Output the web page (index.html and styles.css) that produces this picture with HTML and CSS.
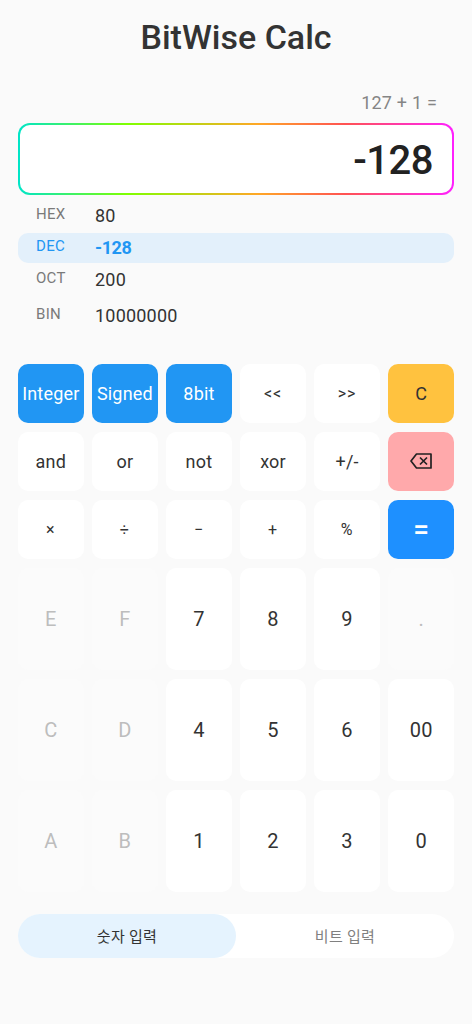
FILE: index.html
```html
<!DOCTYPE html>
<html lang="ko">
<head>
    <meta charset="UTF-8">
    <meta name="viewport" content="width=device-width, initial-scale=1.0">
    <title>BitWise Calc</title>
    <link rel="stylesheet" href="styles.css">
</head>
<body>
    <div class="container">
        <h1 class="title">BitWise Calc</h1>
        <p class="expression">127 + 1 =</p>
        <div class="display">
            <div class="display-inner">-128</div>
        </div>
        <div class="radix-list">
            <div class="radix-row"><span class="radix-label">HEX</span><span class="radix-value">80</span></div>
            <div class="radix-row active"><span class="radix-label">DEC</span><span class="radix-value">-128</span></div>
            <div class="radix-row"><span class="radix-label">OCT</span><span class="radix-value">200</span></div>
            <div class="radix-row bin"><span class="radix-label">BIN</span><span class="radix-value">10000000</span></div>
        </div>
        <div class="keypad">
            <button class="key blue">Integer</button>
            <button class="key blue">Signed</button>
            <button class="key blue">8bit</button>
            <button class="key small">&lt;&lt;</button>
            <button class="key small">&gt;&gt;</button>
            <button class="key yellow">C</button>

            <button class="key">and</button>
            <button class="key">or</button>
            <button class="key">not</button>
            <button class="key">xor</button>
            <button class="key">+/-</button>
            <button class="key pink">
                <svg class="backspace" width="22" height="16" viewBox="0 0 22 16" fill="none" stroke="#222" stroke-width="1.7">
                    <path d="M6.5 1H21V15H6.5L1 8Z" stroke-linejoin="round"/>
                    <path d="M10 4.5L17 11.5M17 4.5L10 11.5"/>
                </svg>
            </button>

            <button class="key small">×</button>
            <button class="key small">÷</button>
            <button class="key small">−</button>
            <button class="key small">+</button>
            <button class="key small">%</button>
            <button class="key equals">=</button>

            <button class="key num disabled">E</button>
            <button class="key num disabled">F</button>
            <button class="key num">7</button>
            <button class="key num">8</button>
            <button class="key num">9</button>
            <button class="key num disabled">.</button>

            <button class="key num disabled">C</button>
            <button class="key num disabled">D</button>
            <button class="key num">4</button>
            <button class="key num">5</button>
            <button class="key num">6</button>
            <button class="key num">00</button>

            <button class="key num disabled">A</button>
            <button class="key num disabled">B</button>
            <button class="key num">1</button>
            <button class="key num">2</button>
            <button class="key num">3</button>
            <button class="key num">0</button>
        </div>
        <div class="mode-toggle">
            <button class="mode selected">숫자 입력</button>
            <button class="mode">비트 입력</button>
        </div>
    </div>
</body>
</html>
```

FILE: styles.css
```css
* {
  box-sizing: border-box;
}

html, body {
  margin: 0;
  height: 1024px;
  overflow: hidden;
}

body {
  background-color: #fafafa;
  font-family: Roboto, "Noto Sans CJK KR", sans-serif;
  color: #222;
}

.container {
  padding: 0 18px;
}

.title {
  margin: 0;
  padding-top: 17px;
  height: 92px;
  line-height: 40px;
  font-size: 34px;
  font-weight: 500;
  text-align: center;
  color: #333;
}

.expression {
  margin: 0;
  height: 31px;
  padding-right: 17px;
  line-height: 22px;
  font-size: 18px;
  letter-spacing: 0.2px;
  text-align: right;
  color: #858585;
}

.display {
  height: 72px;
  padding: 2px;
  border-radius: 12px;
  background: linear-gradient(90deg, #00e5c8 0%, #7fff00 25%, #ffa726 55%, #ff5252 75%, #ff20ff 100%);
}

.display-inner {
  height: 100%;
  padding-right: 19px;
  border-radius: 10px;
  background-color: #fff;
  line-height: 72px;
  font-size: 40px;
  font-weight: 500;
  letter-spacing: -0.5px;
  text-align: right;
  color: #222;
}

.radix-list {
  margin-top: 6px;
  height: 163px;
}

.radix-row {
  display: flex;
  height: 32px;
  padding-left: 18px;
  border-radius: 10px;
  line-height: 30px;
}

.radix-row.active {
  height: 30px;
  margin-bottom: 2px;
  background-color: #e3f0fb;
  color: #2196f3;
}

.radix-row.bin {
  margin-top: 4px;
}

.radix-label {
  width: 59px;
  margin-top: -2px;
  font-size: 15px;
  letter-spacing: 0.3px;
  color: #7a7a7a;
}

.radix-value {
  font-size: 18px;
  letter-spacing: 0.2px;
  color: #333;
}

.active .radix-label,
.active .radix-value {
  color: #2196f3;
}

.active .radix-value {
  font-weight: 700;
  letter-spacing: -0.4px;
}

.keypad {
  display: grid;
  grid-template-columns: repeat(6, 1fr);
  grid-template-rows: repeat(3, 59px) repeat(3, 102px);
  gap: 9px 8.4px;
}

.key {
  display: flex;
  align-items: center;
  justify-content: center;
  padding: 0;
  border: none;
  border-radius: 10px;
  background-color: #fff;
  font-family: inherit;
  font-size: 18px;
  letter-spacing: 0.2px;
  color: #333;
}

.key.small {
  font-size: 16px;
  letter-spacing: 1px;
}

.key.blue {
  background-color: #2196f3;
  color: #fff;
}

.key.yellow {
  background-color: #ffc23f;
}

.key.pink {
  background-color: #ffa9ab;
}

.backspace {
  margin-bottom: 2px;
}

.key.equals {
  background-color: #1e90ff;
  color: #fff;
  font-size: 28px;
  font-weight: 500;
}

.key.num {
  font-size: 20px;
}

.key.disabled {
  background-color: #fbfbfb;
  color: #bdbdbd;
}

.mode-toggle {
  display: flex;
  height: 44px;
  margin-top: 22px;
  border-radius: 22px;
  background-color: #fff;
}

.mode {
  flex: 1;
  padding: 0 0 2px;
  border: none;
  border-radius: 22px;
  background: none;
  font-family: inherit;
  font-size: 15px;
  letter-spacing: 0.3px;
  color: #808080;
}

.mode.selected {
  background-color: #e5f3fe;
  color: #333;
}
```
